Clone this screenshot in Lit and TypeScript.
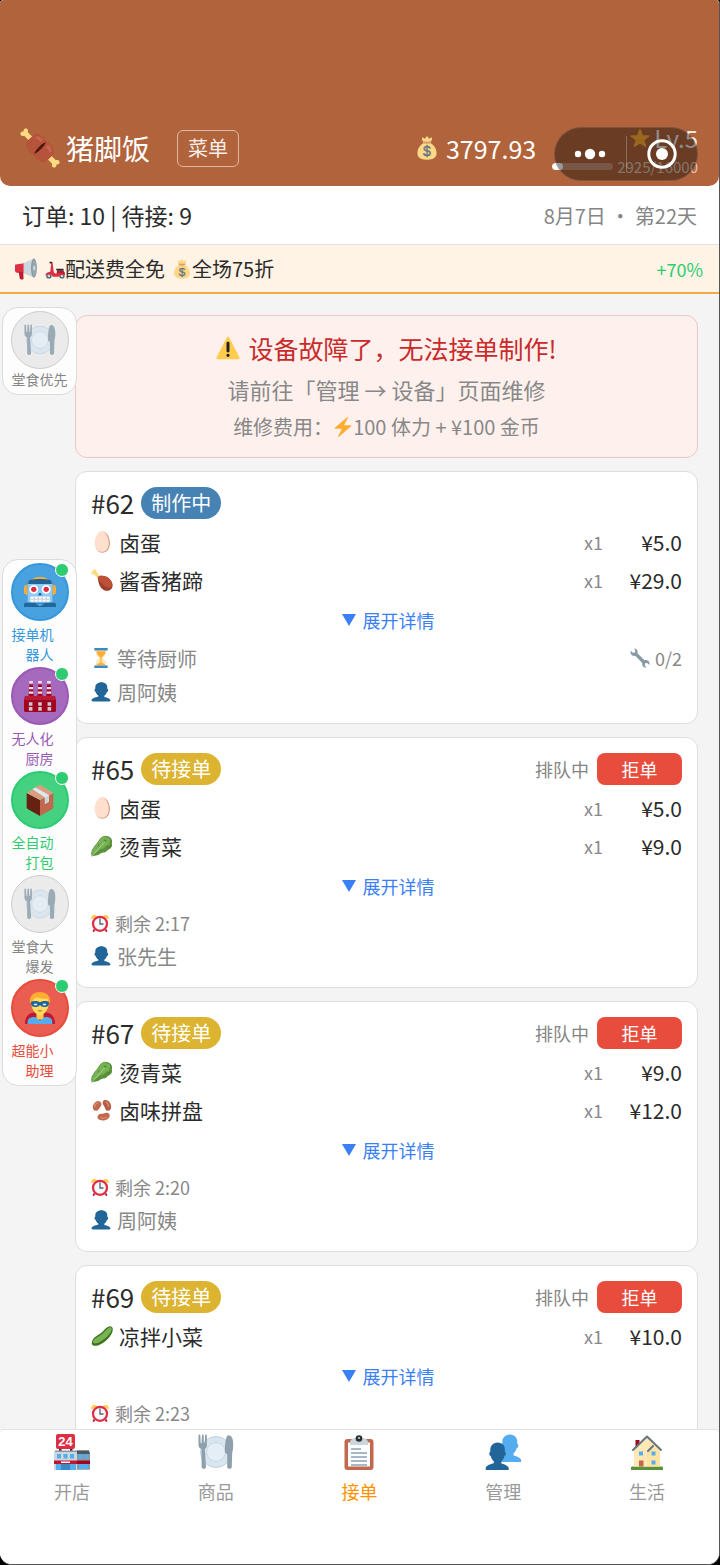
import { LitElement, html, svg, css, nothing } from "lit";
import { customElement, property } from "lit/decorators.js";
import { classMap } from "lit/directives/class-map.js";

const plate = svg`
  <circle cx="18" cy="18" r="15.500" fill="#d9e6f0" stroke="#c3d3e0" stroke-width="1"/>
  <circle cx="18" cy="18" r="9.500" fill="#e4eef6" stroke="#c6d6e3" stroke-width="1"/>
  <path fill="#8ea0ac" d="M.5 1.500c0-1.300 1.700-1.300 1.800 0l.4 7.500h.9L3.900 1.500c.1-1.300 1.700-1.300 1.800 0l.2 7.500h.9L7.100 1.500c.1-1.300 1.700-1.300 1.800 0v9.500c0 2-.8 3.300-2.100 4L8 33c0 2.400-4.400 2.400-4.400 0L3.500 15C1.500 14.300.5 13 .5 11z"/>
  <path fill="#8ea0ac" d="M29 2c2-2 5.500 0 6 5 .4 4 .3 8-.8 12l-.4 14c0 2.400-4.600 2.400-4.600 0V20c-2.200-.5-2.500-2-2.300-4C27 11 27.500 5 29 2z"/>`;

const bust = "M24 26.799v-2.566c2-1.348 4.080-3.779 4.703-6.896.186.103.206.17.413.17.991 0 1.709-1.287 1.709-2.873 0-1.562-.823-2.827-1.794-2.865.187-.674.293-1.577.293-2.735C29.324 5.168 26 .527 18.541.527c-6.629 0-10.777 4.641-10.777 8.507 0 1.123.069 2.043.188 2.755-.911.137-1.629 1.352-1.629 2.845 0 1.587.804 2.873 1.796 2.873.206 0 .025-.067.209-.17C8.952 20.453 11 22.885 13 24.232v2.414c-5 .645-12 3.437-12 6.230v1.061C1 35 2.076 35 3.137 35h29.725C33.924 35 35 35 35 33.938v-1.061c0-2.615-6-5.225-11-6.078z";

const glyphs: Record<string, unknown> = {
  meat: svg`
    <g transform="rotate(45 18 18)">
      <path fill="#ffd983" d="M-2 15.500h8v5h-8c-.3 2.500-4 2.700-4.500.2-.2-1.200.5-2 1.300-2.700-.8-.7-1.500-1.600-1.300-2.700.5-2.500 4.200-2.300 4.500.2zM38 15.500h-8v5h8c.3 2.500 4 2.700 4.500.2.200-1.200-.5-2-1.300-2.700.8-.7 1.500-1.600 1.300-2.700-.5-2.500-4.200-2.300-4.500.2z"/>
      <path fill="#b5533b" d="M4.500 13c1-4 5-5.500 12-5l1.500 1 1.500-1c7-.5 11 1 12 5 .7 3 .7 7 0 10-1 4-5 5.500-12 5l-1.500-1-1.500 1c-7 .5-11-1-12-5-.7-3-.7-7 0-10z"/>
      <path fill="#4d160e" d="M18 11.500c1.200 3 1.200 10 0 13-1.200-3-1.200-10 0-13z" stroke="#4d160e" stroke-width="1.200"/>
      <path fill="#c4674e" d="M7.500 12c1.500-1.700 4-2 7-2v3.500c-3-.3-5 0-7 1zM21.500 10c3 0 5.500.3 7 2v2.500c-2-1-4-1.300-7-1z"/>
    </g>`,
  money: svg`
    <path fill="#fdd888" d="M31.900 21.700C30.600 16.600 27 12.800 23 10.500c.8-1.500 2-4 2.600-6 .5-1.600-.8-2.700-2-2L21 4l-1.700-2.600c-.6-.8-2-.8-2.600 0L15 4l-2.600-1.500c-1.200-.7-2.500.4-2 2 .6 2 1.800 4.500 2.600 6-4 2.300-7.600 6.100-8.900 11.200C2.400 29 4.500 35.500 18 35.500s15.600-6.500 13.900-13.800z"/>
    <path fill="#d9a06a" d="M11.700 9.200c0-1 .9-1.400 1.900-1.200 2.700.5 6.100.5 8.800 0 1-.2 1.900.2 1.900 1.200s-.8 1.700-1.800 1.900c-2.900.5-6.100.5-9 0-1-.2-1.800-.9-1.800-1.900z"/>
    <text x="18" y="30.500" text-anchor="middle" font-family="Liberation Sans, sans-serif" font-size="21" fill="#67757f" stroke="#67757f" stroke-width=".6">$</text>`,
  horn: svg`
    <path fill="#dd2e44" d="M1 10.500l17-2.500v17L7 24H3c-1.700 0-3-1.500-3-3.500v-8c0-1.200.3-1.900 1-2z"/>
    <path fill="#be1931" d="M6 23l7.500.5L14 34c0 1.500-5.500 1.500-6 0z"/>
    <path fill="#ccd6dd" d="M14 8.500L31 1v31l-17-7z"/>
    <ellipse cx="31" cy="16.500" rx="4.800" ry="15.500" fill="#8899a6"/>
    <ellipse cx="31.500" cy="16.500" rx="3" ry="12.500" fill="#9aaab4"/>
    <ellipse cx="31.500" cy="16.500" rx="2" ry="4" fill="#ccd6dd"/>`,
  scooter: svg`
    <circle cx="7" cy="30.500" r="4.800" fill="#55626c"/><circle cx="7" cy="30.500" r="2.500" fill="#ccd6dd"/>
    <circle cx="30.500" cy="30.500" r="4.800" fill="#55626c"/><circle cx="30.500" cy="30.500" r="2.500" fill="#ccd6dd"/>
    <path fill="#dd2e44" d="M9 6.500l3-.8c1-.2 1.500.5 1.700 1.300L15.500 22c.3 2 1.300 4 3.500 4h2l1-5h11c2 2 3 5 3 8h-7c-2 0-3 1-4 3H14c-1.500-3-3.500-4.500-7-4.500-3 0-5 1-6 3-.5-4 2.500-7 8.500-7.500L11 10z"/>
    <path fill="#be1931" d="M22 21h11c1.500 1.500 2.500 3.500 3 6-5-2-10-2-15-1z"/>
    <path fill="#292f33" d="M20 17.500h12c2.500 0 2.500 3.700 0 3.700H23c-2 0-3-1.500-3-3.700zM8 5h5v2.500H8z"/>`,
  star: svg`<path fill="#ffac33" stroke="#ffac33" stroke-width="3" stroke-linejoin="round" d="M18 3.500l4.200 11h11.300l-9 7 3.300 11L18 26l-9.800 6.500 3.300-11-9-7h11.300z"/>`,
  warn: svg`
    <path fill="#ffcc4d" d="M2.653 35C.811 35-.001 33.662.847 32.027L16.456 1.972c.849-1.635 2.238-1.635 3.087 0l15.609 30.056c.85 1.634.037 2.972-1.805 2.972H2.653z"/>
    <path fill="#231f20" d="M15.583 28.953c0-1.333 1.085-2.418 2.419-2.418 1.333 0 2.418 1.085 2.418 2.418 0 1.334-1.086 2.419-2.418 2.419-1.334 0-2.419-1.086-2.419-2.419zm.186-18.293c0-1.302.961-2.108 2.232-2.108 1.241 0 2.233.837 2.233 2.108v11.938c0 1.271-.992 2.108-2.233 2.108-1.271 0-2.232-.807-2.232-2.108V10.660z"/>`,
  bolt: svg`<path fill="#ffac33" d="M32.938 15.651C32.792 15.260 32.418 15 32 15H19.925L26.890 1.458c.219-.426.106-.947-.271-1.243C26.437.071 26.218 0 26 0c-.233 0-.466.082-.653.243L18 6.588 3.347 19.243c-.316.273-.43.714-.284 1.105S3.582 21 4 21h12.075L9.110 34.542c-.219.426-.106.947.271 1.243.182.144.401.215.619.215.233 0 .466-.082.653-.243L18 29.412l14.653-12.655c.317-.273.43-.714.285-1.106z"/>`,
  plate,
  robot: svg`
    <path fill="#ffac33" d="M18 1c6 0 9.500 1.800 10 5H8c.5-3.200 4-5 10-5zM0 13c0-1.700 1.300-3 3-3h2v11H3c-1.700 0-3-1.300-3-3zM36 13c0-1.700-1.300-3-3-3h-2v11h2c1.700 0 3-1.300 3-3z"/>
    <path fill="#66757f" d="M7 5h22c2 0 3 1.500 3 3v20H4V8c0-1.500 1-3 3-3z"/>
    <path fill="#8ccaf7" d="M4 9h28v20c0 2-28 2-28 0z"/>
    <path fill="#269" d="M6 4.500c7-1.500 17-1.500 24 0l1 4.500H5z"/>
    <circle cx="11" cy="15" r="5" fill="#fff"/><circle cx="25" cy="15" r="5" fill="#fff"/>
    <circle cx="11" cy="15" r="3" fill="#dd2e44"/><circle cx="25" cy="15" r="3" fill="#dd2e44"/>
    <path fill="#269" d="M17 19h2l1 3h-4zM0 32c0-1.500 1-2 2-2h32c1 0 2 .5 2 2v3H0z"/>
    <rect x="7" y="23" width="22" height="6" rx="1.500" fill="#fff"/>
    <path stroke="#b8c7d1" stroke-width="1" d="M11.500 23v6M16 23v6M20.500 23v6M25 23v6M7 26h22"/>
    <path fill="#55acee" d="M13 31h10l-5 3z"/>`,
  factory: svg`
    <path fill="#a0041e" d="M6 5h4l1 14H5zM16 5h4l1 14h-6zM26 5h4l1 14h-6z"/>
    <path fill="#f4dfe2" d="M6 1h4v3H6zM16 1h4v3h-4zM26 1h4v3h-4zM5.700 8h4.600v2.500H5.700zM15.700 8h4.600v2.500h-4.600zM25.700 8h4.600v2.500h-4.600zM5.500 13h5v2.500h-5zM15.500 13h5v2.500h-5zM25.500 13h5v2.500h-5z"/>
    <path fill="#be1931" d="M1 18h34l1 4H0z"/><path fill="#a0041e" d="M0 22h36v12c0 1.500-1 2-2 2H2c-1 0-2-.5-2-2z"/>
    <path fill="#cfc6cf" d="M5.500 25h4v4h-4zM16 25h4v4h-4zM26.500 25h4v4h-4zM5.500 30.500h4v4h-4zM16 30.500h4v4h-4zM26.500 30.500h4v4h-4z"/>`,
  box: svg`
    <path fill="#662113" d="M3 10l15 8v18L4.500 28.500C3.500 28 3 27.300 3 26z"/>
    <path fill="#c1694f" d="M33 10l-15 8v18l13.500-7.500c1-.5 1.500-1.200 1.500-2.500z"/>
    <path fill="#d99e82" d="M3 10L17 1.500c.7-.4 1.300-.4 2 0L33 10l-15 8z"/>
    <path fill="#e1e8ed" d="M9.500 6L13 3.800l15 8.700v7.500l-4.500 2.500v-7.700z"/>
    <path fill="#ccd6dd" d="M28 12.500v7.500l-4.500 2.500v-7.700z"/>`,
  hero: svg`
    <path fill="#be1931" d="M1 36c0-8 4-12 9-13h16c5 1 9 5 9 13z"/>
    <path fill="#55acee" d="M4 36c0-4 0-7 6-8 5 0 6 2 8 4 2-2 3-4 8-4 6 1 6 4 6 8z"/>
    <path fill="#ffcc4d" d="M14 22h8v6c0 4-8 4-8 0z"/>
    <path fill="#ffdc5d" d="M8 11c0-6 4-9 10-9s10 3 10 9c0 7-4 15-10 15S8 18 8 11z"/>
    <path fill="#ffac33" d="M6.500 12C6 4 11 0 18 0s12 4 11.500 12c-1.500 0-2-2-3-4.500-5 .5-10-.5-12-1.500-2 1-5 2-5 6z"/>
    <path fill="#1c6399" d="M8 11c3-1.500 7-1 10 .5 3-1.500 7-2 10-.5.5 4-1 6-4.500 6-2.500 0-4-1-5.500-2.500-1.500 1.500-3 2.500-5.500 2.500C9 17 7.500 15 8 11z"/>
    <ellipse cx="13" cy="14" rx="2.200" ry="1.200" fill="#cfe3f2"/><ellipse cx="23" cy="14" rx="2.200" ry="1.200" fill="#cfe3f2"/>
    <path fill="#c1694f" d="M15 20.500h6c-1 2-5 2-6 0z"/>`,
  egg: svg`
    <path fill="#d99e82" d="M31 20.500C31 29 26 35.500 18.500 35.500S7 29 7 20.500C7 11 12 1 19 1s12 10 12 19.500z"/>
    <path fill="#ffe0ce" d="M29 20c0 8-4 14-11 14S6 28 6 20C6 11 11 .5 17.500.5S29 11 29 20z"/>`,
  drumstick: svg`
    <path fill="#ffd983" d="M9 4.500L17 14l-4 3-8-8.500C3 9.500.5 8.500.3 6.500.2 5 1.500 4 3 3.900 3 2 4 .5 5.800.5 8 .3 9.500 2.300 9 4.500z"/>
    <path fill="#9c3f2b" d="M11 14c3-4 13-4 19 2 6 6 7 12 3.500 16.500-4 5-12 4-16.500-1C12.500 26.500 12 20 11 14z"/>
    <path fill="#be5038" d="M11 13.500c4-4 13-3 18.500 2 5 5 6 10 4 13-3 4-9 2-13-2s-7-6.500-9.500-13z"/>`,
  greens: svg`
    <path fill="#5c913b" d="M1 35c-1-4-1-10 3-14 2-5 7-8 9-13 5-7 10-8 14-6 6 1 9 7 7 12 2 6-3 9-7 11-3 5-8 3-11 5-4 4-7 3-15 5z"/>
    <path fill="#77b255" d="M2 32c-1-5 1-9 4-12 1-5 6-7 8-12 3-6 9-7 12-4 5 0 7 5 4 9 1 5-4 6-7 6-2 5-6 3-9 5-4 5-8 5-12 8z"/>
    <path fill="none" stroke="#a6d388" stroke-width="1.600" stroke-linecap="round" d="M2 34L22 12"/>
    <path fill="#3e721d" opacity=".55" d="M20 8c3-2 7 0 6 3-2-1-5-1-6-3zM25 17c4-1 6 1 4 3-2 1-4-1-4-3zM11 20c0-3 1-5 3-6 0 2-1 4-3 6z"/>`,
  beans: svg`
    <path fill="#c1694f" d="M14 4c4 2 4 6 1.500 8.500-2 2-2 4-4 5.500C8 21 3 19 3 13.500S9 1.500 14 4z"/>
    <path fill="#b55f45" d="M19.500 4c2-4 9-3 12 3 2.500 5 2 10.500-2 12-3.500 1-6-1-6.500-4S17.500 8 19.500 4z"/>
    <path fill="#c1694f" d="M11.500 27c2-4 7-2 10-3.500s8-1 9 2.500c1 5-5 9-11 9s-11-3-8-8z"/>
    <path fill="none" stroke="#de8a70" stroke-width="2" stroke-linecap="round" d="M6 12c.5-3 2.500-5 5-5.500M24.500 5c3 1 4 4 4.500 7M16 31c3 1 6.500 1 9.500-1"/>`,
  hourglass: svg`
    <path fill="#ffe8b6" d="M8 4h20c0 7-2 10-7 14 5 4 7 7 7 14H8c0-7 2-10 7-14C10 14 8 11 8 4z"/>
    <path fill="#ffac33" d="M10 6h16c0 5-3 8-7 11v9c3 1 6 3 7 5H10c1-2 4-4 7-5v-9c-4-3-7-6-7-11z"/>
    <path fill="#3b88c3" d="M6 0h24v4.500H6zM6 31.500h24V36H6z"/>`,
  bust: svg`<path fill="#269" d="${bust}"/>`,
  wrench: svg`<path fill="#8899a6" d="M9 1c4 1 5.500 5 4.500 8.500L26 22c4-1.500 8 .5 9 4.500.4 1.500.2 3-.2 4L31 27l-4 .5-.5 4 3.500 3.500c-5 1.500-9-2.500-8-8L9.500 14C5 15 1.500 12.500 1 8.500.8 7 1 6 1.400 5L5 8.500l4-.5.5-4L7.500 1z"/>`,
  clock: svg`
    <path fill="#ffcc4d" d="M1 11c-2-5 2-9 6-9 2.500 0 4 1 5 2.500zM35 11c2-5-2-9-6-9-2.500 0-4 1-5 2.500z"/>
    <path fill="#be1931" d="M5 30l4 2-3 4-3-1zM31 30l-4 2 3 4 3-1z"/>
    <circle cx="18" cy="19.500" r="14" fill="#f5f8fa" stroke="#dd2e44" stroke-width="4.500"/>
    <path fill="none" stroke="#55626c" stroke-width="2.600" stroke-linecap="round" d="M18 10v10h6"/>`,
  cucumber: svg`
    <path fill="#3e721d" d="M34 3c3 3 2 10-4 17-7 8-17 15-25 14-4-1-5-5-2-10C8 17 15 16 20 10c4-5 10-10 14-7z"/>
    <path fill="#77b255" d="M33 4c2 2 1 7-5 13C20 25 11 31 5 30c-3-1-2-4 1-7 5-5 11-6 16-12 3-4 9-9 11-7z"/>`,
  store: svg`
    <rect x="2" y="0" width="19" height="15" rx="2" fill="#dd2e44"/>
    <path fill="#31373d" d="M5 15h2.500v3H5zM16 15h2.500v3H16z"/>
    <path fill="#8899a6" d="M1 16.500h34l1 5v14H0v-14z"/>
    <path fill="#ccd6dd" d="M0 18h23v18H0z"/><path fill="#4b5761" d="M23 16.500h12l1 3.500H23z"/><path fill="#8899a6" d="M23 20h13v15.500H23z"/>
    <path fill="#55acee" d="M3 20h4v4.500H3zM9.500 20h4v4.500h-4zM16 20h4v4.500h-4zM24.500 20H28v4.500h-3.500zM30.500 20H34v4.500h-3.500zM2 30h20v6H2zM25 30h9v5h-9z"/>
    <path fill="#3b88c3" d="M7 30h9v6H7z"/>
    <path fill="#be1931" d="M0 26.500h23v3.500H0z"/><path fill="#a0041e" d="M23 26.500h13v3.500H23z"/><path fill="#fff" d="M7 27.500h9v1.500H7z"/>
    <text x="11.500" y="12" text-anchor="middle" font-family="Liberation Sans, sans-serif" font-size="13" font-weight="700" fill="#fff">24</text>`,
  clipboard: svg`
    <rect x="3.500" y="5" width="29" height="31" rx="3" fill="#c1694f"/>
    <path fill="#fff" d="M7 8.500h22v24H7z"/>
    <path fill="#ccd6dd" d="M9 9c0-3.500 3-5 5-5h8c2 0 5 1.500 5 5v2H9z"/>
    <circle cx="18" cy="4.500" r="3.300" fill="#292f33"/><circle cx="18" cy="4" r="1.100" fill="#ccd6dd"/>
    <path stroke="#8ba3b8" stroke-width="1.500" d="M10 15h10M10 19h16M10 23h16M10 27h16M10 31h16"/>`,
  busts: svg`
    <g transform="translate(12 0) scale(.69 .8)"><path fill="#55acee" d="${bust}"/></g>
    <g transform="translate(0 8) scale(.68 .8)"><path fill="#269" d="${bust}"/></g>`,
  house: svg`
    <path fill="#5c913b" d="M2 34c0-1 .5-1.500 1.500-1.500h29c1 0 1.500.5 1.500 1.500v2H2z"/>
    <path fill="#a0041e" d="M6.500 6h4v8h-4z"/>
    <path fill="#ffe8b6" d="M5 16L18 3l13 12v17.500H5z"/><path fill="#ffd983" d="M18 18l6-6 7 6v14.500H18z" opacity=".35"/>
    <path fill="none" stroke="#66757f" stroke-width="2" stroke-linecap="round" stroke-linejoin="round" d="M4 16L18 2.500 32 16M19 17l5-5"/>
    <path fill="#55acee" d="M10 17.500h4v4h-4zM22.500 17.500h4v4h-4zM22.500 26.500h4v4h-4z"/>
    <path fill="#c1694f" d="M10 26.500h4.500v6H10z"/>`,
};

const emoji = (name: string, cls: string) =>
  html`<svg class="emoji ${cls}" viewBox="0 0 36 36" aria-hidden="true">${glyphs[name]}</svg>`;

const shared = css`
  * { box-sizing: border-box; }
  :host { font-family: "Noto Sans CJK SC", sans-serif; }
  .emoji { display: block; flex: none; overflow: visible; }
  button { font-family: inherit; margin: 0; cursor: pointer; }
  a { text-decoration: none; }
  .s18 { width: 18px; height: 18px; }
  .s20 { width: 20px; height: 20px; }
  .s22 { width: 22px; height: 22px; }
  .s24 { width: 24px; height: 24px; }
  .s32 { width: 32px; height: 32px; }
  .s36 { width: 36px; height: 36px; }
`;

interface Item { icon: string; name: string; price: string; }
interface Order {
  id: number;
  cooking?: boolean;
  items: Item[];
  left?: string;
  customer?: string;
}

const egg: Item = { icon: "egg", name: "卤蛋", price: "¥5.0" };
const greens: Item = { icon: "greens", name: "烫青菜", price: "¥9.0" };

const orders: Order[] = [
  { id: 62, cooking: true, items: [egg, { icon: "drumstick", name: "酱香猪蹄", price: "¥29.0" }], customer: "周阿姨" },
  { id: 65, items: [egg, greens], left: "2:17", customer: "张先生" },
  { id: 67, items: [greens, { icon: "beans", name: "卤味拼盘", price: "¥12.0" }], left: "2:20", customer: "周阿姨" },
  { id: 69, items: [{ icon: "cucumber", name: "凉拌小菜", price: "¥10.0" }], left: "2:23" },
];

@customElement("order-card")
export class OrderCard extends LitElement {
  @property({ attribute: false }) order!: Order;

  static styles = [shared, css`
    :host { display: block; flex: none; }
    .card {
      padding: 15px 15px 14px; background: #fff;
      border: 1px solid #dedede; border-radius: 12px;
    }
    .head { display: flex; align-items: center; height: 32px; margin-bottom: 4px; }
    .id { margin: 0 7px 0 0; font-size: 26px; line-height: 32px; font-weight: 400; color: #2b2b2b; }
    .tag {
      padding: 0 10px; border-radius: 16px; background: #dcb431; color: #fff;
      font-size: 20px; line-height: 32px;
    }
    .tag.cooking { background: #4682b4; }
    .queue { margin-left: auto; font-size: 18px; color: #858585; }
    .reject {
      width: 85px; height: 32px; margin-left: 8px; padding: 0; border: 0; border-radius: 8px;
      background: #e74c3c; color: #fff; font-size: 18px; line-height: 32px;
    }
    .items { margin: 0; padding: 0; list-style: none; }
    .item { display: flex; align-items: center; height: 38px; font-size: 21px; color: #2b2b2b; }
    .name { flex: 1; margin-left: 6px; }
    .qty { font-size: 18px; color: #888; }
    .price { width: 79px; text-align: right; }
    .more {
      display: flex; align-items: center; justify-content: center; gap: 7px;
      width: 100%; height: 42px; padding: 0 0 0 3px; border: 0; background: none;
      color: #3b7ff5; font-size: 18px;
    }
    .arrow { width: 14px; height: 12px; }
    .meta { display: flex; align-items: center; gap: 6px; height: 34px; color: #888; font-size: 20px; }
    .meta.timer { height: 32px; font-size: 18px; }
    .parts { display: flex; align-items: center; gap: 5px; margin-left: auto; font-size: 18px; }
  `];

  render() {
    const o = this.order;
    return html`
      <article class="card">
        <header class="head">
          <h2 class="id">#${o.id}</h2>
          <span class=${classMap({ tag: true, cooking: !!o.cooking })}>${o.cooking ? "制作中" : "待接单"}</span>
          ${o.cooking ? nothing : html`<span class="queue">排队中</span><button class="reject">拒单</button>`}
        </header>
        <ul class="items">
          ${o.items.map((i) => html`
            <li class="item">
              ${emoji(i.icon, "s22")}
              <span class="name">${i.name}</span><span class="qty">x1</span><span class="price">${i.price}</span>
            </li>`)}
        </ul>
        <button class="more">
          <svg class="arrow" viewBox="0 0 14 12" aria-hidden="true"><path fill="currentColor" d="M0 0h14L7 12z"/></svg>
          展开详情
        </button>
        ${o.cooking
          ? html`<div class="meta">${emoji("hourglass", "s20")}<span>等待厨师</span>
              <span class="parts">${emoji("wrench", "s20")}0/2</span></div>`
          : html`<div class="meta timer">${emoji("clock", "s18")}<span>剩余 ${o.left}</span></div>`}
        ${o.customer ? html`<div class="meta">${emoji("bust", "s20")}<span>${o.customer}</span></div>` : nothing}
      </article>`;
  }
}

interface Tool { icon: string; tone: string; label: string; on?: boolean; }

const priority: Tool[] = [{ icon: "plate", tone: "off", label: "堂食优先" }];
const helpers: Tool[] = [
  { icon: "robot", tone: "blue", label: "接单机器人", on: true },
  { icon: "factory", tone: "purple", label: "无人化厨房", on: true },
  { icon: "box", tone: "green", label: "全自动打包", on: true },
  { icon: "plate", tone: "off", label: "堂食大爆发" },
  { icon: "hero", tone: "red", label: "超能小助理", on: true },
];

@customElement("tool-dock")
export class ToolDock extends LitElement {
  @property({ attribute: false }) tools: Tool[] = [];
  @property({ type: Boolean }) wrap = false;

  static styles = [shared, css`
    :host { display: block; }
    .dock {
      display: flex; flex-direction: column; gap: 3px; width: 75px; padding: 3px 7px 5px;
      background: #fdfdfd; border: 1px solid #dcdcdc; border-radius: 16px;
    }
    .tool {
      position: relative; display: flex; flex-direction: column; align-items: center;
      width: 100%; padding: 0; border: 0; background: none; color: #858585;
    }
    .disc {
      display: grid; place-items: center; width: 58px; height: 58px;
      border: 2px solid; border-radius: 50%;
    }
    .label { font-size: 14px; line-height: 20px; white-space: nowrap; }
    .wrap .label { width: 43px; margin: 3px 15px 0 0; white-space: normal; text-align: right; }
    .off .disc { background: #ebebeb; border: 1px solid #cdcdcd; }
    .off .emoji { opacity: .85; }
    .blue { color: #3498db; } .blue .disc { background: #48a2df; border-color: #3498db; }
    .purple { color: #9b59b6; } .purple .disc { background: #a569bd; border-color: #9b59b6; }
    .green { color: #2ecc71; } .green .disc { background: #45d280; border-color: #2ecc71; }
    .red { color: #e74c3c; } .red .disc { background: #e95e50; border-color: #e74c3c; }
    .dot {
      position: absolute; top: 0; right: 0; width: 14px; height: 14px;
      border: 1px solid #fff; border-radius: 50%; background: #2ecc71;
    }
  `];

  render() {
    return html`
      <div class=${classMap({ dock: true, wrap: this.wrap })}>
        ${this.tools.map((t) => html`
          <button class="tool ${t.tone}">
            <span class="disc">${emoji(t.icon, "s32")}</span>
            ${t.on ? html`<span class="dot"></span>` : nothing}
            <span class="label">${t.label}</span>
          </button>`)}
      </div>`;
  }
}

const tabs = [
  { icon: "store", label: "开店" },
  { icon: "plate", label: "商品" },
  { icon: "clipboard", label: "接单", active: true },
  { icon: "busts", label: "管理" },
  { icon: "house", label: "生活" },
];

@customElement("app-root")
export class AppRoot extends LitElement {
  static styles = [shared, css`
    :host { display: block; background: #000; }
    .page {
      display: flex; flex-direction: column; height: 100vh; overflow: hidden;
      background: #f4f4f4; border: solid #555; border-width: 0 1px 1px 0; border-radius: 4px 4px 12px 12px;
    }
    .row { display: flex; align-items: center; flex: none; }
    .top { background: #fff; flex: none; }
    .header {
      position: relative; padding: 110px 21px 0 22px; height: 186px;
      background: #b1643c; color: #fff; border-radius: 0 0 10px 10px;
    }
    .brand { margin: 0 0 0 8px; font-size: 28px; font-weight: 400; }
    .menu {
      height: 37px; margin-left: 27px; padding: 0 10px; border: 1px solid #e3c2b2; border-radius: 6px;
      background: none; color: #fff; font-size: 20px; line-height: 34px; opacity: .9;
    }
    .coins { display: flex; align-items: center; gap: 7px; margin-left: auto; font-size: 25px; }
    .level { align-self: flex-end; margin-left: 16px; padding-bottom: 5px; }
    .line { display: flex; align-items: center; justify-content: flex-end; gap: 4px; height: 29px; }
    .lv { font-size: 24px; line-height: 29px; opacity: .85; }
    .xp { font-size: 15px; line-height: 29px; opacity: .6; }
    .track { width: 61px; height: 7px; border-radius: 4px; background: rgba(255, 255, 255, .3); overflow: hidden; }
    .fill { height: 100%; border-radius: 4px; background: #fff; }
    .capsule {
      position: absolute; right: 21px; bottom: 5px; display: flex; align-items: center;
      width: 144px; height: 54px; border: 1px solid rgba(255, 255, 255, .12); border-radius: 27px;
      background: rgba(0, 0, 0, .4);
    }
    .cap { flex: 1; display: grid; place-items: center; height: 36px; padding: 0; border: 0; background: none; }
    .cap + .cap { border-left: 1px solid rgba(255, 255, 255, .25); }
    .stats { justify-content: space-between; height: 59px; padding: 0 22px; border-bottom: 1px solid #e2e2e2; }
    .count { font-size: 23px; color: #2b2b2b; }
    .date { font-size: 20px; color: #858585; }
    .promo { height: 49px; padding: 0 16px 0 15px; background: #fef3e4; border-bottom: 2px solid #f1ab45; font-size: 20px; color: #2b2b2b; }
    .promo .s22 + .s20 { margin-left: 8px; }
    .promo .bag { margin-left: 7px; }
    .bonus { margin-left: auto; font-size: 18px; color: #2ecc71; }
    .main { position: relative; flex: 1; min-height: 0; overflow: hidden; }
    .list { display: flex; flex-direction: column; gap: 13px; padding: 21px 21px 0 75px; }
    .alert {
      flex: none; padding: 14px 16px 11px; text-align: center; color: #888;
      background: #fef1ed; border: 1px solid #f0c5c5; border-radius: 12px;
    }
    .alert .row { justify-content: center; }
    .fault { gap: 8px; margin: 0 0 4px; font-size: 25px; line-height: 36px; font-weight: 400; color: #c92a2a; }
    .hint { margin: 0; font-size: 22px; line-height: 38px; }
    .cost { margin: 0; font-size: 20px; line-height: 38px; }
    .dock { position: absolute; left: 2px; }
    .dock.upper { top: 13px; }
    .dock.lower { top: 265px; }
    .tabs {
      display: flex; flex: none; height: 135px; padding-top: 4px;
      background: #fff; border-top: 1px solid #e2e2e2; border-radius: 4px 4px 0 0;
    }
    .tab { flex: 1; display: flex; flex-direction: column; align-items: center; font-size: 18px; line-height: 26px; color: #999; }
    .tab .label { margin-top: 8px; }
    .tab.active { color: #ff9100; }
  `];

  render() {
    return html`
      <div class="page">
        <div class="top">
          <header class="header row">
            ${emoji("meat", "s36")}
            <h1 class="brand">猪脚饭</h1>
            <button class="menu">菜单</button>
            <span class="coins">${emoji("money", "s24")}3797.93</span>
            <div class="level">
              <div class="line">${emoji("star", "s20")}<span class="lv">Lv.5</span></div>
              <div class="line">
                <div class="track"><div class="fill" style="width: ${(2925 / 16000) * 100}%"></div></div>
                <span class="xp">2925/16000</span>
              </div>
            </div>
            <div class="capsule">
              <button class="cap" aria-label="更多">
                <svg width="32" height="12" viewBox="0 0 32 12"><g fill="#fff"><circle cx="4" cy="6" r="3.200"/><circle cx="16" cy="6" r="5.200"/><circle cx="28" cy="6" r="3.200"/></g></svg>
              </button>
              <button class="cap" aria-label="关闭">
                <svg width="30" height="30" viewBox="0 0 30 30"><circle cx="15" cy="15" r="13.200" fill="none" stroke="#fff" stroke-width="3"/><circle cx="15" cy="15" r="6" fill="#fff"/></svg>
              </button>
            </div>
          </header>
          <div class="stats row">
            <span class="count">订单: 10 | 待接: 9</span>
            <span class="date">8月7日 · 第22天</span>
          </div>
        </div>
        <div class="promo row">
          ${emoji("horn", "s22")}${emoji("scooter", "s20")}<span>配送费全免</span>
          ${emoji("money", "s20 bag")}<span>全场75折</span>
          <span class="bonus">+70%</span>
        </div>
        <main class="main">
          <div class="list">
            <section class="alert">
              <h2 class="fault row">${emoji("warn", "s24")}设备故障了，无法接单制作!</h2>
              <p class="hint">请前往「管理 → 设备」页面维修</p>
              <p class="cost row">维修费用：${emoji("bolt", "s20")}100 体力 + ¥100 金币</p>
            </section>
            ${orders.map((o) => html`<order-card .order=${o}></order-card>`)}
          </div>
          <tool-dock class="dock upper" .tools=${priority}></tool-dock>
          <tool-dock class="dock lower" .tools=${helpers} wrap></tool-dock>
        </main>
        <nav class="tabs">
          ${tabs.map((t) => html`
            <a href="#" class=${classMap({ tab: true, active: !!t.active })}>
              ${emoji(t.icon, "s36")}<span class="label">${t.label}</span>
            </a>`)}
        </nav>
      </div>`;
  }
}
